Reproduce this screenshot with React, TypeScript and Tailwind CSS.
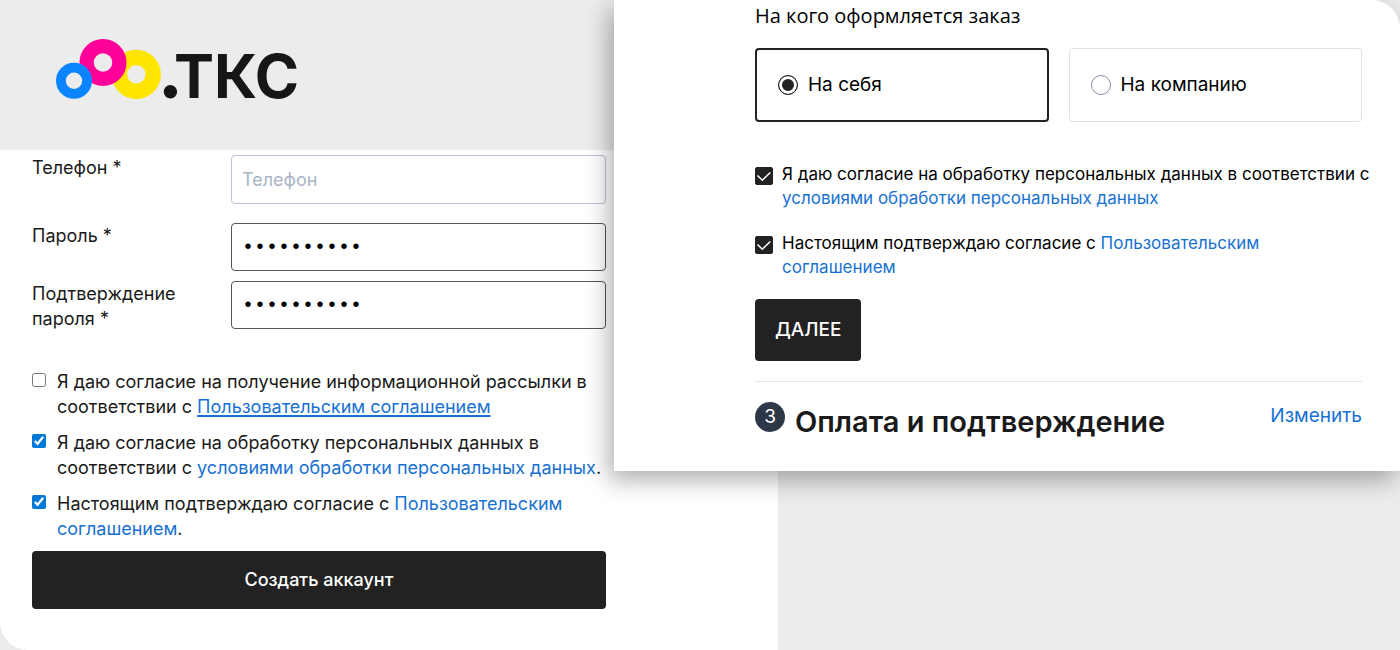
import { useState } from 'react'
import type { ReactNode } from 'react'

function Logo() {
  return (
    <a href="#" aria-label=".ТКС" className="block w-62">
      <svg viewBox="0 0 248 80" className="w-full" fill="none">
        <circle cx="81.3" cy="36.3" r="16.9" stroke="#ffe600" strokeWidth="15.4" />
        <circle cx="48" cy="24.5" r="16.4" stroke="#ff0099" strokeWidth="14.2" />
        <circle cx="19" cy="42.7" r="13.1" stroke="#0a85ff" strokeWidth="9.8" />
        <circle cx="115.4" cy="53.7" r="6.7" fill="#161616" />
        <text x="119" y="60" fill="#161616" fontSize="60" className="font-['Inter',sans-serif] font-bold">
          ТКС
        </text>
      </svg>
    </a>
  )
}

function Field({ id, label, children }: { id: string; label: ReactNode; children: ReactNode }) {
  return (
    <div className="flex items-start">
      <label htmlFor={id} className="w-[199px] shrink-0 leading-[25px]">
        {label}
      </label>
      {children}
    </div>
  )
}

function PasswordInput({ id }: { id: string }) {
  const [value, setValue] = useState('qwerty1234')

  return (
    <input
      id={id}
      type="password"
      value={value}
      onChange={(e) => setValue(e.target.value)}
      className="h-12 min-w-0 flex-1 rounded border border-[#555] bg-white px-2.5 font-['Liberation_Mono',monospace] text-xl text-black"
    />
  )
}

function Consent({ id, checked = false, children }: { id: string; checked?: boolean; children: ReactNode }) {
  return (
    <div className="flex items-start gap-[11px]">
      <input id={id} type="checkbox" defaultChecked={checked} className="mt-1 size-3.5 shrink-0 accent-[#0078d7]" />
      <label htmlFor={id} className="leading-[25px]">
        {children}
      </label>
    </div>
  )
}

function DarkConsent({ id, children }: { id: string; children: ReactNode }) {
  return (
    <div className="flex items-start gap-[9px]">
      <span className="mt-[5px] grid size-[18px] shrink-0">
        <input
          id={id}
          type="checkbox"
          defaultChecked
          className="peer col-start-1 row-start-1 size-[18px] appearance-none rounded-xs border border-[#222] checked:bg-[#222]"
        />
        <svg
          viewBox="0 0 18 18"
          fill="none"
          stroke="#fff"
          strokeWidth="1.5"
          className="pointer-events-none invisible col-start-1 row-start-1 peer-checked:visible"
        >
          <path d="M2.5 8.5 7.3 13.2 15.3 5.5" />
        </svg>
      </span>
      <label htmlFor={id} className="leading-6">
        {children}
      </label>
    </div>
  )
}

function PayerOption({ value, label, checked = false }: { value: string; label: string; checked?: boolean }) {
  return (
    <label className="flex h-[74px] items-center gap-2.5 rounded border border-[#dbe2ec] px-[21px] text-[19px] has-checked:border-2 has-checked:border-[#222]">
      <input
        type="radio"
        name="payer"
        value={value}
        defaultChecked={checked}
        className="size-5 appearance-none rounded-full border border-[#8390a5] bg-white checked:border-[#222] checked:bg-[#222] checked:inset-ring-3 checked:inset-ring-white"
      />
      {label}
    </label>
  )
}

function Link({ children, underline = false }: { children: ReactNode; underline?: boolean }) {
  return (
    <a href="#" className={underline ? 'text-[#1871d2] underline decoration-2 underline-offset-2' : 'text-[#1871d2]'}>
      {children}
    </a>
  )
}

function RegisterForm() {
  return (
    <form
      onSubmit={(e) => e.preventDefault()}
      className="w-5/9 flex-1 rounded-bl-[28px] bg-white pt-[5px] pr-43 pb-10 pl-8 text-lg text-[#1a1a1a]"
    >
      <Field id="phone" label="Телефон *">
        <input
          id="phone"
          type="tel"
          placeholder="Телефон"
          className="h-[49px] min-w-0 flex-1 rounded border border-[#b8c2d3] bg-white px-2.5 placeholder:text-[#a9b5c6]"
        />
      </Field>
      <div className="mt-[19px] flex flex-col gap-2.5">
        <Field id="password" label="Пароль *">
          <PasswordInput id="password" />
        </Field>
        <Field
          id="password-confirm"
          label={
            <>
              Подтверждение
              <br />
              пароля *
            </>
          }
        >
          <PasswordInput id="password-confirm" />
        </Field>
      </div>

      <div className="mt-[38px] flex flex-col gap-[11px] whitespace-nowrap">
        <Consent id="news">
          Я даю согласие на получение информационной рассылки в
          <br />
          соответствии с <Link underline>Пользовательским соглашением</Link>
        </Consent>
        <Consent id="personal-data" checked>
          Я даю согласие на обработку персональных данных в
          <br />
          соответствии с <Link>условиями обработки персональных данных</Link>.
        </Consent>
        <Consent id="agreement" checked>
          Настоящим подтверждаю согласие с <Link>Пользовательским</Link>
          <br />
          <Link>соглашением</Link>.
        </Consent>
      </div>

      <button type="submit" className="mt-2.5 h-[58px] w-full rounded bg-[#222] font-medium text-white">
        Создать аккаунт
      </button>
    </form>
  )
}

function OrderPanel() {
  return (
    <section className="absolute top-0 right-0 left-[614px] rounded-tr-[28px] bg-white pt-1 pr-[38px] pb-[33px] pl-[141px] text-black shadow-[-5px_9px_24px_rgba(0,0,0,0.32)]">
      <form onSubmit={(e) => e.preventDefault()}>
        <fieldset>
          <legend className="font-['Open_Sans',sans-serif] text-xl leading-6">На кого оформляется заказ</legend>
          <div className="mt-5 grid grid-cols-2 gap-5">
            <PayerOption value="self" label="На себя" checked />
            <PayerOption value="company" label="На компанию" />
          </div>
        </fieldset>

        <div className="mt-10 flex flex-col gap-[21px] text-[17px] whitespace-nowrap">
          <DarkConsent id="order-personal-data">
            Я даю согласие на обработку персональных данных в соответствии с
            <br />
            <Link>условиями обработки персональных данных</Link>
          </DarkConsent>
          <DarkConsent id="order-agreement">
            Настоящим подтверждаю согласие с <Link>Пользовательским</Link>
            <br />
            <Link>соглашением</Link>
          </DarkConsent>
        </div>

        <button type="submit" className="mt-5 h-[62px] rounded bg-[#222] px-5 text-[19px] font-medium text-white">
          ДАЛЕЕ
        </button>
      </form>

      <div className="mt-5 flex items-start border-t border-[#e5e5e5] pt-5 text-[19px]">
        <span className="flex size-[30px] items-center justify-center rounded-full bg-[#2d3748] text-white">3</span>
        <h2 className="ml-2.5 pt-1 text-[29px] leading-8 font-semibold text-[#1a1a1a]">Оплата и подтверждение</h2>
        <a href="#" className="ml-auto leading-7 text-[#1871d2]">
          Изменить
        </a>
      </div>
    </section>
  )
}

export default function App() {
  return (
    <main className="relative flex min-h-screen flex-col overflow-hidden bg-[#ececec] font-['Inter',sans-serif]">
      <header className="h-[150px] pt-[38px] pl-[55px]">
        <Logo />
      </header>
      <RegisterForm />
      <OrderPanel />
    </main>
  )
}
